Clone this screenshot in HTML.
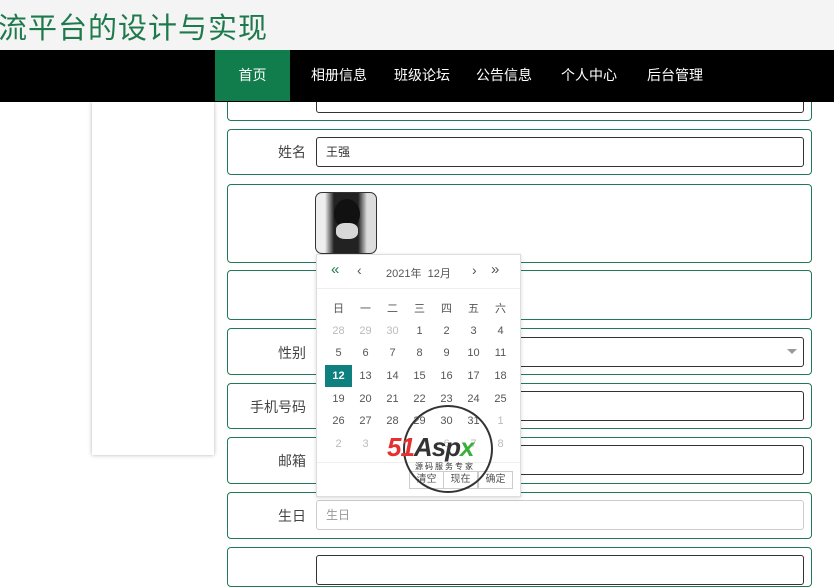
<!DOCTYPE html>
<html><head><meta charset="utf-8"><style>
*{box-sizing:border-box;margin:0;padding:0}
body{width:834px;height:567px;overflow:hidden;background:#fff;font-family:"Liberation Sans","Noto Sans CJK SC",sans-serif;position:relative}
.hdr{position:absolute;left:0;top:0;width:834px;height:50px;background:#f4f4f4}
.hdr span{position:absolute;left:-2px;top:5px;font-size:29px;color:#1e7a4c;letter-spacing:1px}
.nav{position:absolute;left:0;top:50px;width:834px;height:52px;background:#000}
.nav a{position:absolute;top:0;height:52px;line-height:50px;color:#fff;font-size:14px}
.nav .on{background:#117c4c;left:215px;width:75px;text-align:center;height:51px}
.card{position:absolute;left:92px;top:102px;width:122px;height:353px;background:#fff;box-shadow:0 0 4px rgba(0,0,0,.3)}
.row{position:absolute;left:227px;width:585px;border:1px solid #1f7a55;border-radius:4px;background:#fff}
.lab{position:absolute;right:505px;font-size:14px;color:#444;text-align:right;white-space:nowrap}
.inp{position:absolute;left:88px;width:488px;height:30px;border:1px solid #333;border-radius:3px;font-size:12px;color:#333;padding-left:9px;line-height:28px}
.cal{position:absolute;left:316px;top:254px;width:205px;height:243px;background:#fff;border:1px solid #ddd;box-shadow:0 1px 4px rgba(0,0,0,.15);font-size:11px;color:#555}
.cal .h{height:34px;border-bottom:1px solid #eee;position:relative}
.cal .h span{position:absolute;top:10px}
.cal table{border-collapse:collapse;position:absolute;left:8px;top:42px}
.cal td{width:27px;height:22.6px;text-align:center}
.cal .g{color:#bbb}
.cal .sel{background:#0e8080;color:#fff;font-weight:bold}
.ft{position:absolute;left:0;top:207px;width:203px;border-top:1px solid #eee}
.btn{position:absolute;top:216px;height:18px;border:1px solid #ccc;font-size:10px;line-height:16px;text-align:center;width:35px}
</style></head><body>
<div class="hdr"><span>流平台的设计与实现</span></div>
<div class="card"></div>
<div class="row" style="top:90px;height:31px"><div class="inp" style="top:-4px;height:26px"></div></div>
<div class="row" style="top:129px;height:46px"><div class="lab" style="top:12px">姓名</div><div class="inp" style="top:7px">王强</div></div>
<div class="row" style="top:184px;height:79px"><div style="position:absolute;left:87px;top:7px;width:62px;height:62px;border-radius:7px;background:linear-gradient(90deg,#eee 0 15%,#222 30% 70%,#ddd 85%);border:1px solid #333;overflow:hidden"><div style="position:absolute;left:18px;top:6px;width:26px;height:30px;border-radius:50%;background:#111"></div><div style="position:absolute;left:20px;top:30px;width:22px;height:16px;background:#d8d8d8;border-radius:40%"></div></div></div>
<div class="row" style="top:270px;height:50px"></div>
<div class="row" style="top:328px;height:47px"><div class="lab" style="top:14px">性别</div><div class="inp" style="top:8px"></div><span style="position:absolute;right:14px;top:20px;border:5px solid transparent;border-top-color:#999"></span></div>
<div class="row" style="top:383px;height:46px"><div class="lab" style="top:13px">手机号码</div><div class="inp" style="top:7px"></div></div>
<div class="row" style="top:437px;height:47px"><div class="lab" style="top:13px">邮箱</div><div class="inp" style="top:7px"></div></div>
<div class="row" style="top:492px;height:47px"><div class="lab" style="top:13px">生日</div><div class="inp" style="top:7px;border-color:#ccc;color:#999">生日</div></div>
<div class="row" style="top:547px;height:40px"><div class="inp" style="top:7px"></div></div>
<div class="nav"><a class="on">首页</a><a style="left:311px">相册信息</a><a style="left:394px">班级论坛</a><a style="left:476px">公告信息</a><a style="left:561px">个人中心</a><a style="left:647px">后台管理</a></div>
<div class="cal">
<div class="h"><span style="left:14px;color:#1e7a4c;font-size:15px;top:6px">«</span><span style="left:40px;font-size:14px;top:7px">‹</span><span style="left:69px">2021年 &nbsp;12月</span><span style="left:155px;font-size:14px;top:7px">›</span><span style="left:174px;font-size:15px;top:6px">»</span></div>
<table>
<tr><td>日</td><td>一</td><td>二</td><td>三</td><td>四</td><td>五</td><td>六</td></tr>
<tr><td class="g">28</td><td class="g">29</td><td class="g">30</td><td>1</td><td>2</td><td>3</td><td>4</td></tr>
<tr><td>5</td><td>6</td><td>7</td><td>8</td><td>9</td><td>10</td><td>11</td></tr>
<tr><td class="sel">12</td><td>13</td><td>14</td><td>15</td><td>16</td><td>17</td><td>18</td></tr>
<tr><td>19</td><td>20</td><td>21</td><td>22</td><td>23</td><td>24</td><td>25</td></tr>
<tr><td>26</td><td>27</td><td>28</td><td>29</td><td>30</td><td>31</td><td class="g">1</td></tr>
<tr><td class="g">2</td><td class="g">3</td><td class="g"></td><td class="g"></td><td class="g">6</td><td class="g">7</td><td class="g">8</td></tr>
</table>
<div class="ft"></div>
<div class="btn" style="left:92px">清空</div><div class="btn" style="left:126px">现在</div><div class="btn" style="left:161px">确定</div>
</div>
<div style="position:absolute;left:403px;top:405px;width:90px;height:88px;border:2px solid #333;border-radius:50%"></div>
<div style="position:absolute;left:387px;top:432px;font-size:26px;font-weight:bold;font-style:italic;letter-spacing:-1px"><span style="color:#e53030">51</span><span style="color:#333">Asp</span><span style="color:#3ab03a">x</span></div>
<div style="position:absolute;left:415px;top:461px;font-size:8px;color:#333;letter-spacing:2px">源码服务专家</div>
</body></html>
